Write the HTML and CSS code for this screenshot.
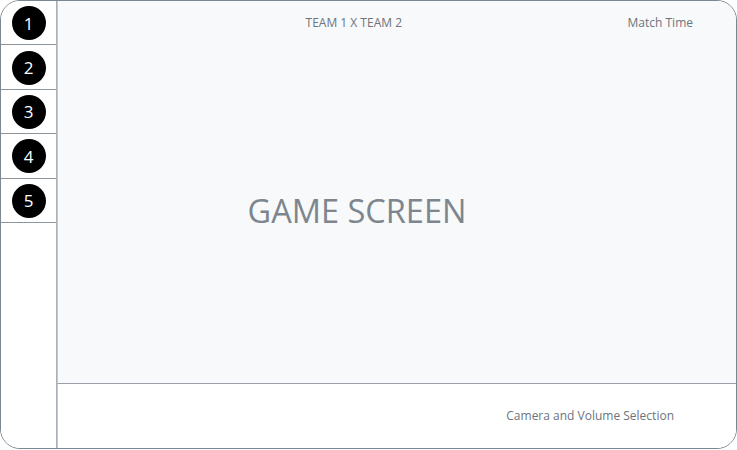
FILE: index.html
```html
<!DOCTYPE html>
<html>
<head>
<meta charset="utf-8">
<link rel="stylesheet" href="styles.css">
</head>
<body>
<div class="frame">
  <aside class="sidebar">
    <div class="slot"><span class="num">1</span></div>
    <div class="slot"><span class="num">2</span></div>
    <div class="slot"><span class="num">3</span></div>
    <div class="slot"><span class="num">4</span></div>
    <div class="slot"><span class="num">5</span></div>
  </aside>
  <main class="main">
    <div class="stage">
      <header class="header">
        <div class="teams">TEAM 1 X TEAM 2</div>
        <div class="time">Match Time</div>
      </header>
      <div class="game">GAME SCREEN</div>
    </div>
    <footer class="controls">Camera and Volume Selection</footer>
  </main>
</div>
</body>
</html>
```

FILE: styles.css
```css
html, body {
  margin: 0;
  padding: 0;
  background: #ffffff;
}
body {
  font-family: "Open Sans", "Noto Sans", sans-serif;
  color: #6c757d;
}
.frame {
  box-sizing: border-box;
  width: 737px;
  height: 449px;
  border: 1px solid #7c8792;
  border-radius: 20px;
  overflow: hidden;
  display: flex;
}
.sidebar {
  width: 55px;
  flex: none;
  border-right: 1px solid #a9b0b7;
  background: #ffffff;
}
.slot {
  box-sizing: border-box;
  height: 44.4px;
  border-bottom: 1px solid #8d959c;
  display: flex;
  align-items: center;
  justify-content: center;
  padding-top: 1px;
}
.num {
  width: 34px;
  height: 34px;
  border-radius: 50%;
  background: #000000;
  color: #ffffff;
  display: flex;
  align-items: center;
  justify-content: center;
  font-size: 17px;
  line-height: 1;
}
.main {
  flex: 1;
  display: flex;
  flex-direction: column;
}
.stage {
  flex: 1;
  background: #f8f9fa;
  display: flex;
  flex-direction: column;
  border-left: 1px solid #c4c9ce;
}
.header {
  height: 42px;
  display: flex;
  align-items: center;
  font-size: 12px;
}
.teams {
  flex: 1;
  text-align: center;
  padding-left: 22px;
}
.time {
  margin-right: 43px;
}
.game {
  flex: 1;
  display: flex;
  align-items: center;
  justify-content: center;
  padding-right: 80px;
  padding-bottom: 6px;
  font-size: 32.5px;
  color: #7d868e;
}
.controls {
  box-sizing: border-box;
  height: 65px;
  border-top: 1px solid #9aa1a8;
  border-left: 1px solid #c4c9ce;
  background: #ffffff;
  display: flex;
  align-items: center;
  justify-content: flex-end;
  padding-right: 62px;
  padding-bottom: 2px;
  font-size: 12px;
}
```
